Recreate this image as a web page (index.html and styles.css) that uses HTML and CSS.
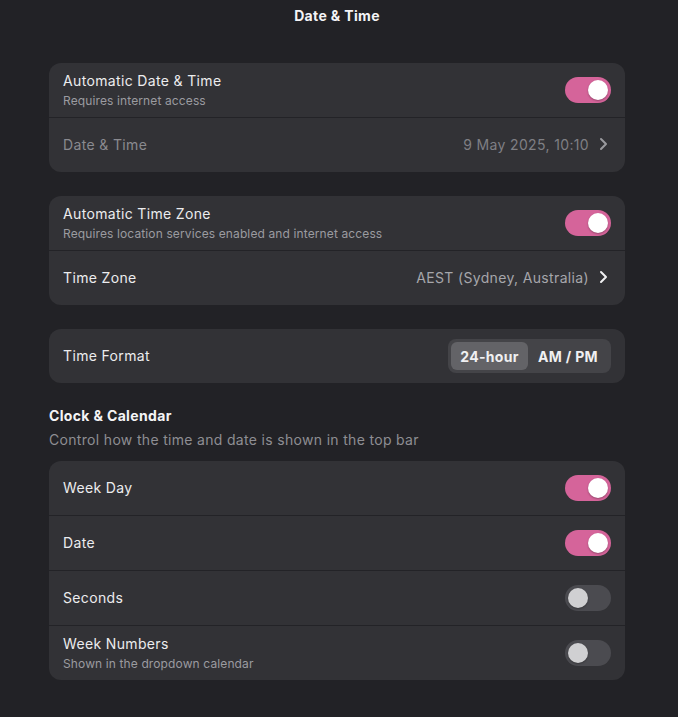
FILE: index.html
```html
<!DOCTYPE html>
<html>
<head>
<meta charset="utf-8">
<link rel="stylesheet" href="styles.css">
</head>
<body>
<div class="page">
  <h1 class="title">Date &amp; Time</h1>
  <div class="content">
    <section class="card">
      <div class="row">
        <div class="text">
          <div class="label">Automatic Date &amp; Time</div>
          <div class="sub">Requires internet access</div>
        </div>
        <span class="toggle on"><span class="knob"></span></span>
      </div>
      <div class="row">
        <div class="label dim">Date &amp; Time</div>
        <div class="value dim">9 May 2025, 10:10
          <svg class="chev" width="9" height="14" viewBox="0 0 9 14"><path d="M2 2l5 5-5 5" fill="none" stroke="currentColor" stroke-width="2" stroke-linecap="round" stroke-linejoin="round"/></svg>
        </div>
      </div>
    </section>

    <section class="card">
      <div class="row">
        <div class="text">
          <div class="label">Automatic Time Zone</div>
          <div class="sub">Requires location services enabled and internet access</div>
        </div>
        <span class="toggle on"><span class="knob"></span></span>
      </div>
      <div class="row">
        <div class="label">Time Zone</div>
        <div class="value">AEST (Sydney, Australia)
          <svg class="chev bright" width="9" height="14" viewBox="0 0 9 14"><path d="M2 2l5 5-5 5" fill="none" stroke="currentColor" stroke-width="2" stroke-linecap="round" stroke-linejoin="round"/></svg>
        </div>
      </div>
    </section>

    <section class="card">
      <div class="row">
        <div class="label">Time Format</div>
        <div class="segmented">
          <span class="seg active">24-hour</span>
          <span class="seg">AM / PM</span>
        </div>
      </div>
    </section>

    <div class="group">
      <div class="group-head">
        <h2 class="group-title">Clock &amp; Calendar</h2>
        <p class="group-desc">Control how the time and date is shown in the top bar</p>
      </div>
      <section class="card">
        <div class="row">
          <div class="label">Week Day</div>
          <span class="toggle on"><span class="knob"></span></span>
        </div>
        <div class="row">
          <div class="label">Date</div>
          <span class="toggle on"><span class="knob"></span></span>
        </div>
        <div class="row">
          <div class="label">Seconds</div>
          <span class="toggle"><span class="knob"></span></span>
        </div>
        <div class="row">
          <div class="text">
            <div class="label">Week Numbers</div>
            <div class="sub">Shown in the dropdown calendar</div>
          </div>
          <span class="toggle"><span class="knob"></span></span>
        </div>
      </section>
    </div>
  </div>
</div>
</body>
</html>
```
FILE: styles.css
```css
* { box-sizing: border-box; }
html, body {
  margin: 0;
  padding: 0;
  background: #222226;
}
body {
  font-family: Inter, "Noto Sans", sans-serif;
  color: #ececee;
  width: 678px;
  height: 717px;
  overflow: hidden;
}
.page {
  padding-top: 7px;
}
.title {
  margin: 0 0 38px 0;
  width: 674px;
  text-align: center;
  font-size: 14px;
  font-weight: 700;
  line-height: 18px;
  letter-spacing: 0.35px;
  color: #f4f4f6;
}
.content {
  margin-left: 49px;
  width: 576px;
  display: flex;
  flex-direction: column;
  gap: 24px;
}
.card {
  background: #323236;
  border-radius: 12px;
  overflow: hidden;
  display: flex;
  flex-direction: column;
  gap: 1px;
}
.card > .row + .row {
  box-shadow: 0 -1px 0 #232327;
}
.row {
  height: 54px;
  padding: 0 14px 2px 14px;
  display: flex;
  align-items: center;
  justify-content: space-between;
}
.text {
  display: flex;
  flex-direction: column;
  gap: 5px;
  padding-top: 1px;
}
.label {
  font-size: 14px;
  line-height: 17px;
  letter-spacing: 0.35px;
  color: #ececee;
}
.sub {
  font-size: 12px;
  line-height: 14px;
  letter-spacing: 0.12px;
  color: #9b9ba0;
}
.label.dim { color: #8a8a8f; }
.value {
  display: flex;
  align-items: center;
  gap: 9px;
  font-size: 14px;
  letter-spacing: 0.35px;
  color: #a6a6ab;
}
.value.dim { color: #7f7f84; }
.chev { color: #9a9a9e; margin-right: 3px; margin-left: 1px; }
.chev.bright { color: #f0f0f2; }
.toggle {
  width: 46px;
  height: 26px;
  border-radius: 13px;
  background: #4b4b50;
  display: flex;
  align-items: center;
  padding: 0 3px;
  margin-top: 2px;
}
.toggle .knob {
  width: 20px;
  height: 20px;
  border-radius: 50%;
  background: #d0d0d2;
  box-shadow: 0 1px 2px rgba(0,0,0,0.3);
}
.toggle.on {
  background: #d5649a;
  justify-content: flex-end;
}
.toggle.on .knob { background: #ffffff; }
.segmented {
  display: flex;
  align-items: center;
  height: 34px;
  padding: 3px;
  border-radius: 8px;
  background: #444448;
  margin-top: 2px;
}
.seg {
  height: 28px;
  display: flex;
  align-items: center;
  justify-content: center;
  border-radius: 6px;
  font-size: 14px;
  font-weight: 700;
  letter-spacing: 0.3px;
  color: #f0f0f2;
  width: 80px;
}
.seg.active {
  width: 77px;
  background: #636367;
}
.group {
  display: flex;
  flex-direction: column;
  gap: 12px;
}
.group-head {
  display: flex;
  flex-direction: column;
  gap: 6px;
}
.group-title {
  margin: 0;
  font-size: 14px;
  font-weight: 700;
  line-height: 18px;
  letter-spacing: 0.35px;
  color: #f4f4f6;
}
.group-desc {
  margin: 0;
  font-size: 14px;
  line-height: 18px;
  letter-spacing: 0.32px;
  color: #8e8e93;
}
```
